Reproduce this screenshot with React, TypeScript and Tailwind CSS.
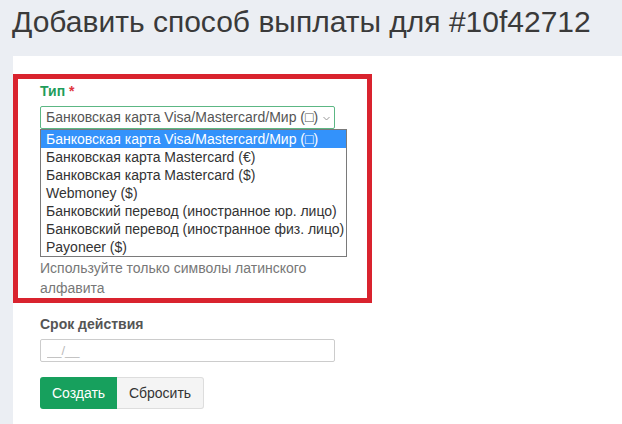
import React from 'react';

const options = [
  'Банковская карта Visa/Mastercard/Мир (□)',
  'Банковская карта Mastercard (€)',
  'Банковская карта Mastercard ($)',
  'Webmoney ($)',
  'Банковский перевод (иностранное юр. лицо)',
  'Банковский перевод (иностранное физ. лицо)',
  'Payoneer ($)',
];

export default function App() {
  return (
    <div className="flex min-h-screen flex-col bg-[#ebeef3] font-['Liberation_Sans',Arial,sans-serif]">
      <div className="h-[56px] pl-[12px] pt-[5px]">
        <h1 className="text-[30px] leading-[33px] text-[#3a3a3a]">Добавить способ выплаты для #10f42712</h1>
      </div>

      <div className="ml-[13px] flex-1 bg-white pt-[18px]">
        {/* annotated group */}
        <div className="w-[359px] border-[5px] border-[#d9232e] pl-[22px] pt-[3px]">
          <div className="text-[14px] font-bold leading-[18px] text-[#1f9d5b]">
            Тип <span className="text-[#e0343d]">*</span>
          </div>

          <div className="relative mt-[6px] w-[295px]">
            <div className="flex h-[23px] items-center justify-between rounded-[2px] border border-[#5cb784] pl-[5px] pr-[4px] text-[14px] text-[#555]">
              <span className="whitespace-nowrap">{options[0]}</span>
              <svg width="7" height="5" viewBox="0 0 7 5" className="mt-[1px] shrink-0">
                <path d="M0.5 1 L3.5 4 L6.5 1" fill="none" stroke="#999" strokeWidth="1" />
              </svg>
            </div>

            <ul className="absolute left-0 top-full z-10 w-[307px] border border-[#7a7a7a] bg-white">
              {options.map((o, i) => (
                <li
                  key={o}
                  className={`h-[18px] whitespace-nowrap pl-[5px] text-[14px] leading-[18px] ${
                    i === 0 ? 'bg-[#3392fb] text-white' : 'text-[#333]'
                  }`}
                >
                  {o}
                </li>
              ))}
            </ul>
          </div>

          <div className="flex h-[128px] w-[295px] items-end">
            <input className="h-[28px] w-full rounded-[2px] border border-[#ccc]" />
          </div>

          <p className="mt-px w-[295px] text-[14px] leading-[20px] text-[#777]">
            Используйте только символы латинского алфавита
          </p>
        </div>

        <div className="pl-[27px]">
          <div className="mt-[12px] text-[14px] font-bold leading-[18px] text-[#555]">Срок действия</div>
          <input
            placeholder="__/__"
            className="mt-[6px] block h-[23px] w-[295px] rounded-[2px] border border-[#ccc] px-[6px] text-[13px] text-[#555] placeholder:text-[#bbb]"
          />
          <div className="mt-[15px] flex">
            <button className="h-[32px] w-[77px] rounded-l-[3px] bg-[#17a05d] text-[14px] text-white">Создать</button>
            <button className="h-[32px] w-[87px] rounded-r-[3px] border border-l-0 border-[#ddd] bg-[#f4f4f4] text-[14px] text-[#333]">
              Сбросить
            </button>
          </div>
        </div>
      </div>
    </div>
  );
}
